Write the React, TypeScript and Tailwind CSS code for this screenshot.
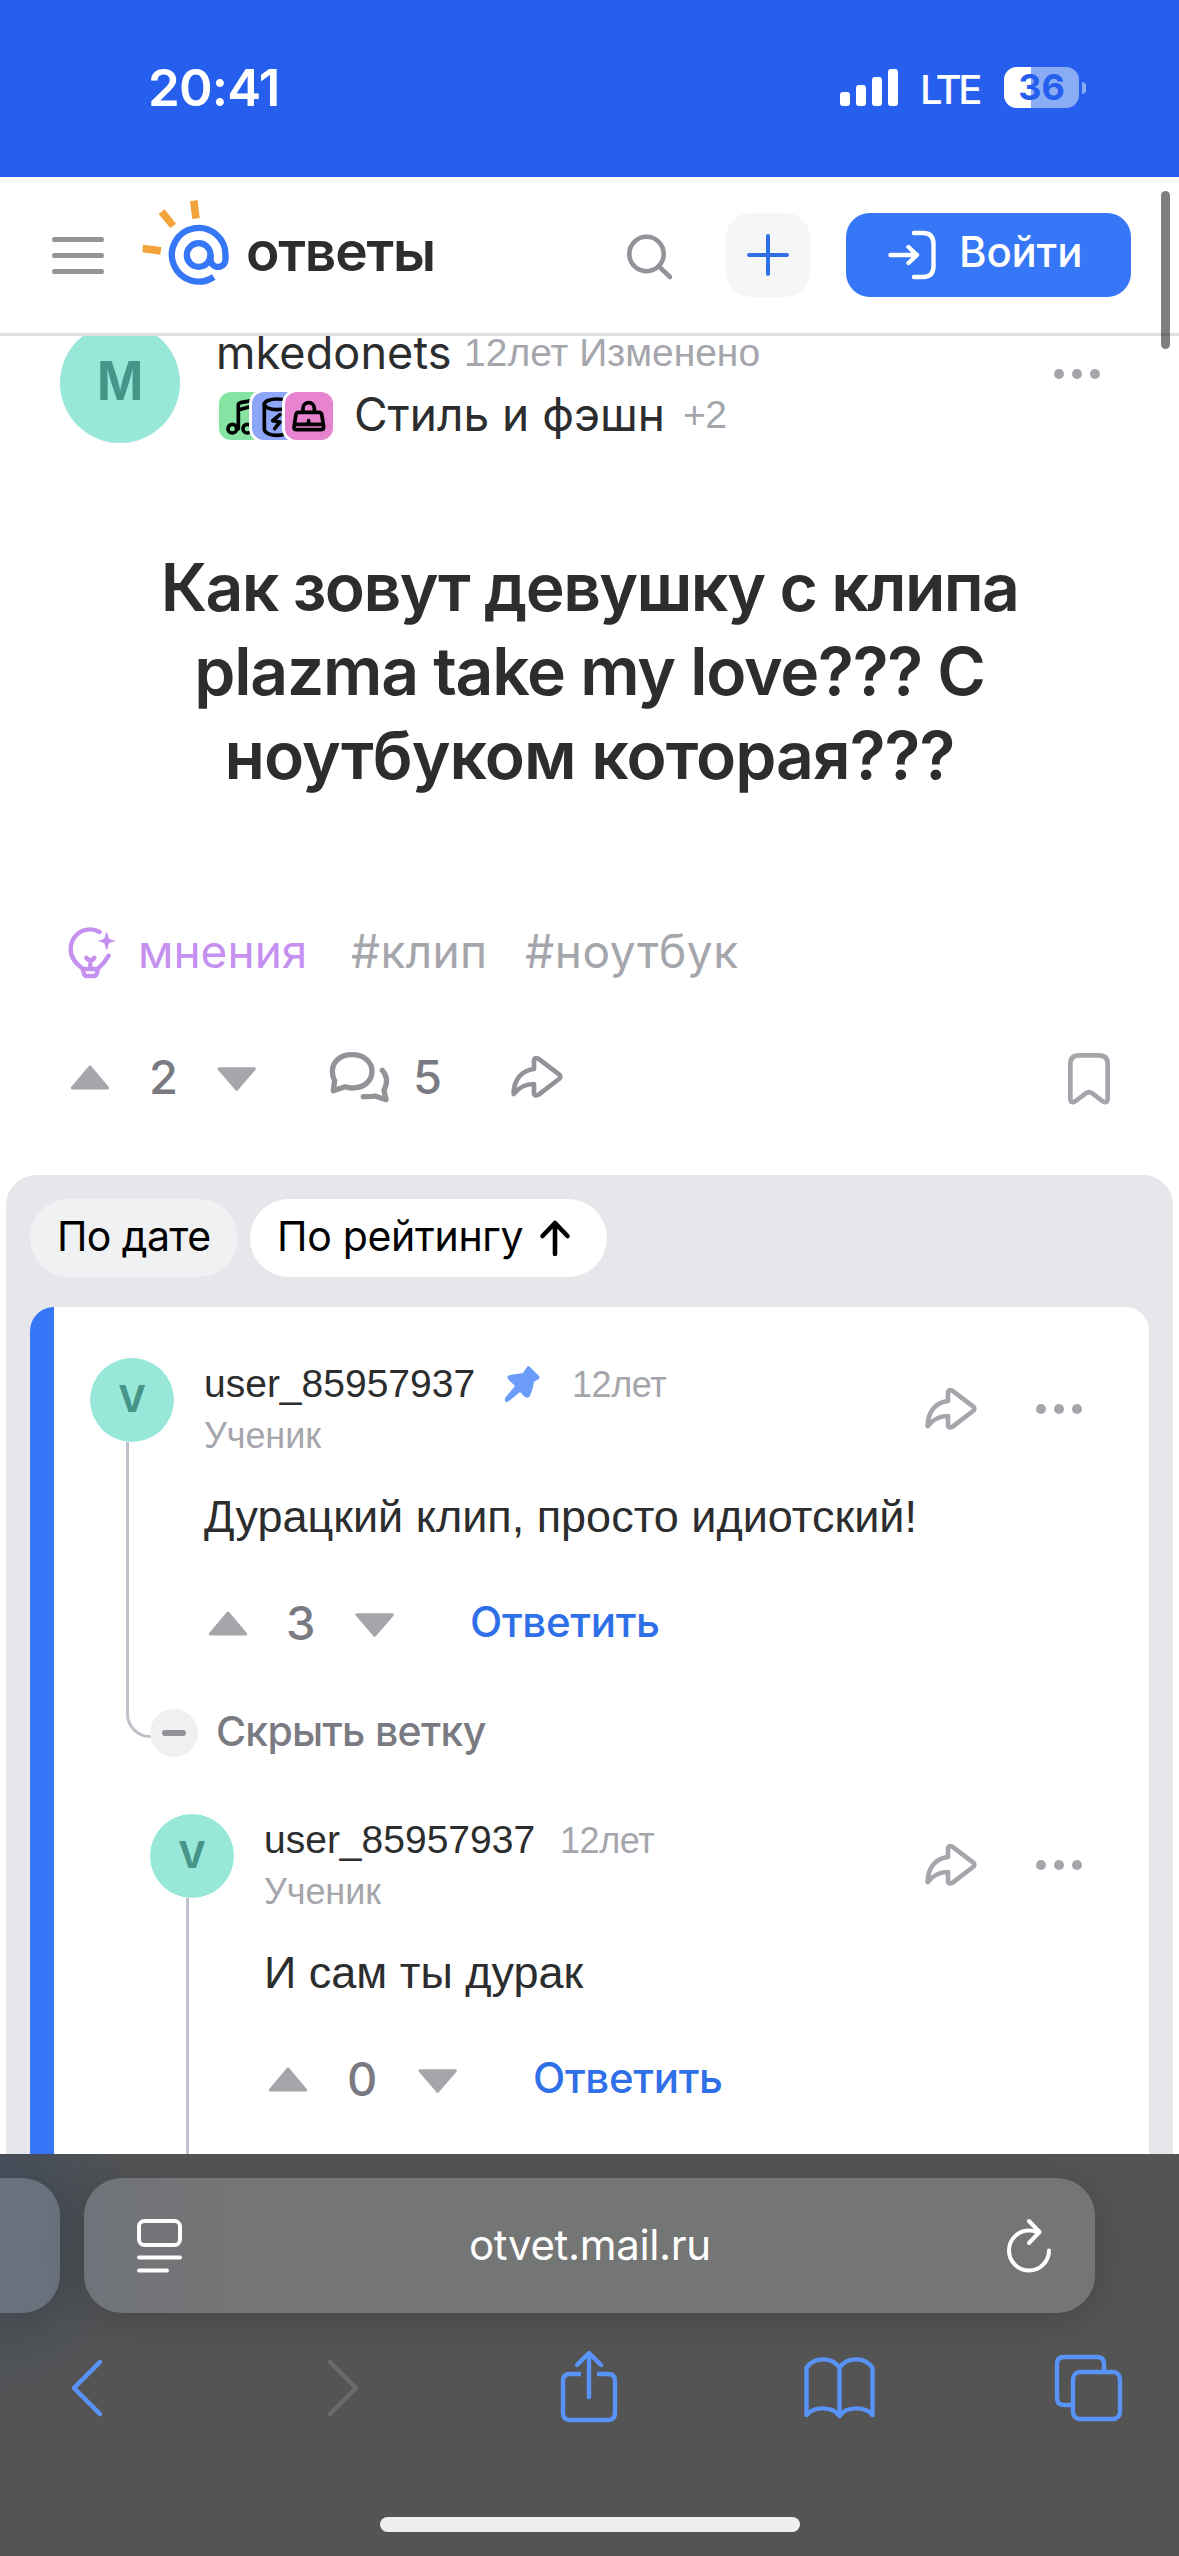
import type { ReactNode } from 'react'

interface Comment {
  id: number
  name: string
  rank: string
  age: string
  text: string
  votes: number
  votesClass: string
  pinned?: boolean
  reply?: boolean
}

const comments: Comment[] = [
  {
    id: 1,
    name: 'user_85957937',
    rank: 'Ученик',
    age: '12лет',
    text: 'Дурацкий клип, просто идиотский!',
    votes: 3,
    votesClass: 'w-[69px]',
    pinned: true,
  },
  {
    id: 2,
    name: 'user_85957937',
    rank: 'Ученик',
    age: '12лет',
    text: 'И сам ты дурак',
    votes: 0,
    votesClass: 'w-[72px] pl-px',
    reply: true,
  },
]

function Dots() {
  return (
    <div className="flex gap-2">
      <span className="size-[10px] rounded-full bg-[#a5a6ac]" />
      <span className="size-[10px] rounded-full bg-[#a5a6ac]" />
      <span className="size-[10px] rounded-full bg-[#a5a6ac]" />
    </div>
  )
}

function UpIcon() {
  return (
    <svg viewBox="60 444 120 84" className="h-[28px] w-[40px] shrink-0 fill-[#a5a6ac] stroke-[#a5a6ac]">
      <path d="M120 456 L173 519 H67 Z" strokeWidth="9" strokeLinejoin="round" />
    </svg>
  )
}

function DownIcon() {
  return (
    <svg viewBox="502 444 120 84" className="h-[28px] w-[40px] shrink-0 fill-[#a5a6ac] stroke-[#a5a6ac]">
      <path d="M561 523 L508 461 H614 Z" strokeWidth="9" strokeLinejoin="round" />
    </svg>
  )
}

function ShareIcon({ className }: { className: string }) {
  return (
    <svg viewBox="1380 420 162 144" fill="none" className={`h-[48px] w-[54px] shrink-0 ${className}`}>
      <path
        d="M1452 443 Q1452 432 1465 437 L1527 484 Q1535 491 1527 498 L1466 545 Q1452 551 1452 540 V513 C1424 513 1407 522 1391 543 C1391 500 1415 472 1452 468 Z"
        stroke="currentColor"
        strokeWidth="14"
        strokeLinejoin="round"
      />
    </svg>
  )
}

function StatusBar() {
  return (
    <div className="flex h-[177px] shrink-0 items-center bg-[#265eee] pb-[2px] pl-[148px] pr-[93px] text-white">
      <span className="text-[51px] font-semibold leading-[60px] tracking-[-0.8px]">20:41</span>
      <div className="ml-auto flex items-center">
        <div className="flex h-[37px] items-end gap-[6px]">
          <span className="h-[14px] w-[10px] rounded-[3px] bg-white" />
          <span className="h-[21px] w-[10px] rounded-[3px] bg-white" />
          <span className="h-[29px] w-[10px] rounded-[3px] bg-white" />
          <span className="h-[37px] w-[10px] rounded-[3px] bg-white" />
        </div>
        <span className="ml-[22px] w-[60px] pt-[4px] text-[40px] font-medium leading-[50px] tracking-[-3.3px]">LTE</span>
        <div className="relative ml-[24px] h-[41px] w-[75px] rounded-[13px] bg-[#8aacf5]">
          <div className="h-full w-[27px] rounded-l-[13px] bg-white" />
          <span className="absolute inset-0 text-center text-[36px] font-bold leading-[41px] text-[#265eee]">36</span>
        </div>
        <span className="ml-[3px] h-[12px] w-[4px] rounded-r-full bg-[#8aacf5]" />
      </div>
    </div>
  )
}

function Header() {
  return (
    <div className="flex h-[159px] shrink-0 items-center border-b-[3px] border-[#dfdfe5] bg-white pl-[52px] pr-[48px]">
      <div className="flex flex-col gap-[11px]">
        <span className="h-[5px] w-[52px] rounded-full bg-[#929299]" />
        <span className="h-[5px] w-[52px] rounded-full bg-[#929299]" />
        <span className="h-[5px] w-[52px] rounded-full bg-[#929299]" />
      </div>
      <svg viewBox="36 30 264 330" className="ml-[38px] h-[110px] w-[88px]">
        <g fill="#f2a33a">
          <path d="M180 34 L203 30 L209 84 L187 87 Z" />
          <path d="M86 72 L104 58 L138 101 L121 114 Z" />
          <path d="M39 164 L94 171 L91 194 L37 187 Z" />
        </g>
        <g fill="none" stroke="#3577f7" strokeWidth="19">
          <path d="M251 261 A80.5 80.5 0 1 1 286.500 195 V208 A22.5 22.5 0 0 1 241.500 208 V195" />
          <circle cx="206" cy="195" r="35.5" />
        </g>
      </svg>
      <span className="ml-[16px] pb-[9px] text-[55px] font-semibold leading-[60px] tracking-[-1.2px] text-[#2c2d2e]">ответы</span>
      <svg viewBox="0 0 51 51" fill="none" className="ml-auto size-[51px]">
        <circle cx="22.500" cy="24" r="17.200" stroke="#929299" strokeWidth="4.600" />
        <path d="M35 36.500 L46 47" stroke="#929299" strokeWidth="4.600" strokeLinecap="round" />
      </svg>
      <button className="ml-[51px] flex size-[84px] items-center justify-center rounded-[24px] bg-[#f5f7f7]">
        <svg viewBox="0 0 42 42" className="size-[42px]">
          <path d="M21 2 V40 M2 21 H40" stroke="#2f6fe8" strokeWidth="4" strokeLinecap="round" />
        </svg>
      </button>
      <button className="ml-[36px] flex h-[84px] w-[285px] items-center rounded-[24px] bg-[#3577f7] pl-[40px] text-white">
        <svg viewBox="0 0 52 50" fill="none" className="h-[50px] w-[52px]" stroke="white" strokeWidth="4.400" strokeLinecap="round" strokeLinejoin="round">
          <path d="M4.500 25 H31 M22.500 17 L31 25 L22.500 33" />
          <path d="M28 3 H37 C44 3 47.500 7 47.500 14 V36 C47.500 43 44 47 37 47 H28" />
        </svg>
        <span className="ml-[21px] pb-[6px] text-[42px] font-medium leading-[50px] tracking-[-0.2px]">Войти</span>
      </button>
    </div>
  )
}

function Category({ className, children }: { className: string; children: ReactNode }) {
  return (
    <div className={`size-[48px] rounded-[12px] shadow-[0_0_0_3px_white] ${className}`}>
      <svg viewBox="0 0 144 144" className="size-full" fill="none" stroke="black" strokeWidth="11" strokeLinecap="round" strokeLinejoin="round">
        {children}
      </svg>
    </div>
  )
}

function Post() {
  return (
    <div className="flex h-[839px] shrink-0 flex-col overflow-hidden text-[#2c2d2e]">
      <div className="flex h-[209px] shrink-0 pl-[60px]">
        <div className="-mt-[13px] flex size-[120px] shrink-0 items-center justify-center rounded-full bg-[#98e8da] pb-[6px] text-[54px] font-bold text-[#479588]">
          <span className="scale-x-92">M</span>
        </div>
        <div className="ml-[36px]">
          <div className="flex leading-[33px]">
            <span className="w-[248px] text-[45px] tracking-[0.1px]">mkedonets</span>
            <span className="font-['Liberation_Sans',sans-serif] text-[39px] text-[#a5a6ac]">12лет Изменено</span>
          </div>
          <div className="mt-[23px] flex pl-[3px]">
            <Category className="bg-[#85e4a1]">
              <circle cx="40" cy="110" r="13" />
              <circle cx="85" cy="110" r="13" />
              <path d="M58 110 V38 Q58 34 64 32 L103 25 M58 54 L103 41 M103 25 V108" />
            </Category>
            <Category className="-ml-[15px] bg-[#8ea6f8]">
              <ellipse cx="75" cy="37" rx="38" ry="16" />
              <path d="M37 37 V112 C40 136 110 136 113 112 V37 M84 68 L62 86 L84 90 L68 110" />
            </Category>
            <Category className="-ml-[15px] bg-[#e884cf]">
              <path d="M54 60 V49 A17 17 0 0 1 88 49 V60" />
              <path d="M40 61 H102 Q109 61 110 67 L116 104 Q116 113 107 113 H35 Q26 113 27 104 L33 67 Q34 61 40 61 Z M28 97 H114 M71 86 V92" />
            </Category>
            <span className="ml-[21px] w-[329px] text-[46px] leading-[45px]">Стиль и фэшн</span>
            <span className="font-['Liberation_Sans',sans-serif] text-[39px] leading-[45px] tracking-[-0.5px] text-[#a5a6ac]">+2</span>
          </div>
        </div>
        <div className="ml-auto mr-[79px] mt-[33px]">
          <Dots />
        </div>
      </div>

      <h1 className="text-center text-[66px] font-semibold leading-[84px]">
        <span className="block tracking-[-1.6px]">Как зовут девушку с клипа</span>
        <span className="block tracking-[-1.25px]">plazma take my love??? С</span>
        <span className="block tracking-[-0.95px]">ноутбуком которая???</span>
      </h1>

      {/* Tags */}
      <div className="mt-[124px] flex items-center pl-[67px] text-[46px] leading-[60px] text-[#a5a6ac]">
        <svg viewBox="50 24 150 168" fill="none" className="h-[56px] w-[50px]" stroke="#c690f0" strokeWidth="13" strokeLinecap="round" strokeLinejoin="round">
          <path d="M148 51 C139 46 130 43 120 43 C87 43 61 69 61 103 C61 130 78 146 97 161 L100 174 Q102 183 110 183 H130 Q138 183 140 174 L143 161 C156 150 166 138 175 122" />
          <path d="M98 162 H142 M120 160 V135 M108 128 Q112 136 120 135 Q128 136 132 128" />
          <path d="M169 51 Q173 56 175 69 Q178 73 197 78 Q178 83 175 87 Q173 100 169 105 Q165 100 163 87 Q160 83 142 78 Q160 73 163 69 Q165 56 169 51 Z" fill="#c690f0" stroke="none" />
        </svg>
        <span className="ml-[21px] w-[213px] text-[#c690f0]">мнения</span>
        <span className="w-[174px] tracking-[0.3px]">#клип</span>
        <span className="tracking-[0.6px]">#ноутбук</span>
      </div>

      {/* Post actions */}
      <div className="mt-[66px] flex items-center pl-[70px] pr-[68px] text-[47px] font-medium leading-[60px] text-[#7a7b82]">
        <UpIcon />
        <span className="ml-[39px] w-[68px]">2</span>
        <DownIcon />
        <svg viewBox="838 402 183 168" fill="none" className="ml-[72px] h-[56px] w-[61px]" stroke="#929299" strokeWidth="16" strokeLinecap="round" strokeLinejoin="round">
          <path d="M907 419 C943 419 967 441 967 469 C967 499 943 519 907 519 C899 519 893 518 886 515 L851 527 L855 497 C850 489 848 480 848 469 C848 441 871 419 907 419 Z" />
          <path d="M998 466 C1013 484 1014 505 1003 526 L1009 554 L976 543 C965 546 952 545 941 545" />
        </svg>
        <span className="ml-[23px] w-[97px]">5</span>
        <ShareIcon className="text-[#929299]" />
        <svg viewBox="0 0 132 168" fill="none" className="ml-auto h-[56px] w-[44px]">
          <path
            d="M10 44 Q10 19 36 19 H96 Q122 19 122 44 V148 Q122 166 106 156 L76 133 Q66 126 56 133 L26 156 Q10 166 10 148 Z"
            stroke="#a5a6ac"
            strokeWidth="14"
            strokeLinejoin="round"
          />
        </svg>
      </div>
    </div>
  )
}

function CommentItem({ comment }: { comment: Comment }) {
  return (
    <div className={comment.reply ? 'mt-[57px] flex h-[340px] pl-[96px]' : 'flex h-[380px] pl-[36px]'}>
      <div className="flex w-[84px] shrink-0 flex-col">
        <div className="flex size-[84px] shrink-0 items-center justify-center rounded-full bg-[#98e8da] pb-[3px] text-[37px] font-bold text-[#479588]">
          V
        </div>
        <div
          className={
            comment.reply
              ? 'ml-[36px] flex-1 border-l-[3px] border-[#c0c2cb]'
              : 'ml-[36px] w-[26px] flex-1 rounded-bl-[24px] border-b-[3px] border-l-[3px] border-[#c0c2cb]'
          }
        />
      </div>
      <div className="ml-[30px] flex-1 whitespace-nowrap pt-[3px] font-['Liberation_Sans',sans-serif] text-[#2c2d2e]">
        <div className="flex h-[46px] items-center leading-[46px]">
          <span className="w-[296px] text-[39px]">{comment.name}</span>
          {comment.pinned && (
            <svg viewBox="0 0 44 44" className="mr-[28px] size-[44px] fill-[#6b9cf9]">
              <path d="M27 5 Q28 3 30 5 L39 14 Q41 17 37 18 L34 20 Q33 27 30 34 Q28 37 25 35 L20 30 L9 39 Q4 42 5 36 L15 24 L8 17 Q6 14 10 13 L23 11 Z" />
            </svg>
          )}
          <span className="pt-[2px] text-[36px] tracking-[-0.4px] text-[#a5a6ac]">{comment.age}</span>
        </div>
        <p className="mt-[9px] text-[36px] leading-[40px] tracking-[-0.1px] text-[#a5a6ac]">{comment.rank}</p>
        <p className="mt-[31px] text-[45px] leading-[60px]">{comment.text}</p>
        <div className="mt-[46px] flex h-[60px] items-center pl-[4px] font-['Inter',sans-serif] font-medium leading-[60px]">
          <UpIcon />
          <span className={`ml-[38px] text-[47px] text-[#7a7b82] ${comment.votesClass}`}>{comment.votes}</span>
          <DownIcon />
          <button className="ml-[75px] pb-[3px] text-[42px] tracking-[-0.3px] text-[#2f6fe8]">Ответить</button>
        </div>
      </div>
      <div className="mr-[67px] mt-[27px] flex h-[48px] shrink-0 items-center gap-[58px] text-[#a5a6ac]">
        <ShareIcon className="" />
        <Dots />
      </div>
    </div>
  )
}

function Comments() {
  return (
    <div className="mx-[6px] flex h-[979px] shrink-0 flex-col overflow-hidden rounded-t-[30px] bg-[#e6e7eb] px-[24px] pt-[24px]">
      <div className="flex h-[78px] shrink-0 gap-[12px] text-[41px] leading-[50px] text-black">
        <button className="flex w-[208px] items-center rounded-full bg-[#f0f1f3] pb-[5px] pl-[27px] tracking-[-0.6px]">По дате</button>
        <button className="flex w-[357px] items-center rounded-full bg-white pb-[5px] pl-[27px] tracking-[-0.3px]">
          По рейтингу
          <svg viewBox="0 0 32 38" fill="none" className="ml-[16px] mt-[5px] h-[38px] w-[32px]">
            <path d="M16 35 V4 M3.500 17 L16 4 L28.500 17" stroke="black" strokeWidth="4.600" strokeLinecap="round" strokeLinejoin="round" />
          </svg>
        </button>
      </div>
      <div className="mt-[30px] flex flex-1 overflow-hidden rounded-t-[24px] bg-white">
        <div className="w-[24px] shrink-0 bg-[#3577f7]" />
        <div className="flex-1 pt-[51px]">
          <CommentItem comment={comments[0]} />
          <div className="-mt-[29px] flex h-[48px] items-center pl-[96px]">
            <span className="flex size-[48px] items-center justify-center rounded-full bg-[#f0f0f1]">
              <span className="h-[6px] w-[24px] rounded-full bg-[#929299]" />
            </span>
            <span className="ml-[18px] pb-[5px] text-[41px] font-medium leading-[48px] tracking-[-0.7px] text-[#7a7b82]">Скрыть ветку</span>
          </div>
          <CommentItem comment={comments[1]} />
        </div>
      </div>
    </div>
  )
}

function BrowserBar() {
  return (
    <div className="h-[402px] shrink-0 overflow-hidden bg-[#545454] bg-[radial-gradient(ellipse_150px_220px_at_0px_50px,#434d5b,transparent)] pt-[24px]">
      <div className="flex h-[135px] gap-[24px]">
        <div className="w-[60px] rounded-r-[38px] bg-[#69717d] shadow-[0_6px_40px_rgba(0,0,0,0.16)]" />
        <div className="flex w-[1011px] items-center rounded-[38px] bg-[#747575] bg-linear-to-r from-[#70737a] to-[#747575] to-15% pl-[52px] pr-[42px] text-white shadow-[0_6px_40px_rgba(0,0,0,0.16)]">
          <svg viewBox="0 0 48 56" fill="none" className="h-[56px] w-[48px]" stroke="white" strokeWidth="4" strokeLinecap="round">
            <rect x="3" y="3" width="41" height="24" rx="5.500" />
            <path d="M3 39.500 H44 M3 52.500 H31" />
          </svg>
          <span className="ml-[285px] pb-[2px] text-[42px] leading-[50px] tracking-[-0.35px]">otvet.mail.ru</span>
          <svg viewBox="0 0 48 58" fill="none" className="ml-auto h-[58px] w-[48px]" stroke="white" strokeWidth="4" strokeLinecap="round" strokeLinejoin="round">
            <path d="M32 15 C29 14 27 13.500 24 13.500 A20 20 0 1 0 44 33.500 M24 4 L34.500 15 L24 26" />
          </svg>
        </div>
      </div>
      <div className="flex h-[150px] items-center pl-[49px]">
        <svg viewBox="0 0 72 84" fill="none" className="h-[84px] w-[72px]" stroke="#5a93f8" strokeWidth="4.500" strokeLinecap="round" strokeLinejoin="round">
          <path d="M51 16 L25 42 L51 68" />
        </svg>
        <svg viewBox="0 0 72 84" fill="none" className="ml-[186px] h-[84px] w-[72px]" stroke="#6b6b6b" strokeWidth="4.500" strokeLinecap="round" strokeLinejoin="round">
          <path d="M23 16 L49 42 L23 68" />
        </svg>
        <svg viewBox="0 0 72 84" fill="none" className="ml-[174px] h-[84px] w-[72px]" stroke="#5a93f8" strokeWidth="4.400" strokeLinecap="round" strokeLinejoin="round">
          <path d="M36 51 V8 M24 19 L36 7 L48 19" />
          <path d="M28 28 H17 Q10 28 10 35 V67 Q10 74 17 74 H55 Q62 74 62 67 V35 Q62 28 55 28 H44" strokeLinecap="butt" />
        </svg>
        <svg viewBox="0 0 72 84" fill="none" className="ml-[179px] h-[84px] w-[72px]" stroke="#5a93f8" strokeWidth="4.400" strokeLinecap="round" strokeLinejoin="round">
          <path d="M35.500 22 C29 11 10 10 2.500 22 V69 C10 60 29 60 35.500 70 C42 60 61 60 68.500 69 V22 C61 10 42 11 35.500 22 Z V70" />
        </svg>
        <svg viewBox="0 0 72 84" fill="none" className="ml-[177px] h-[84px] w-[72px]" stroke="#5a93f8" strokeWidth="4.400" strokeLinejoin="round">
          <rect x="20" y="26" width="47" height="47" rx="7" />
          <path d="M51 26 V18 Q51 11 44 11 H11 Q4 11 4 18 V52 Q4 59 11 59 H20" />
        </svg>
      </div>
      <div className="mx-auto mt-[54px] h-[15px] w-[420px] rounded-full bg-[#efefef]" />
    </div>
  )
}

export default function App() {
  return (
    <div className="relative flex h-[2556px] w-[1179px] flex-col overflow-hidden bg-white font-['Inter',sans-serif]">
      <StatusBar />
      <Header />
      <Post />
      <Comments />
      <BrowserBar />
      {/* page scrollbar */}
      <div className="absolute right-[9px] top-[191px] h-[158px] w-[9px] rounded-full bg-black/50" />
    </div>
  )
}
